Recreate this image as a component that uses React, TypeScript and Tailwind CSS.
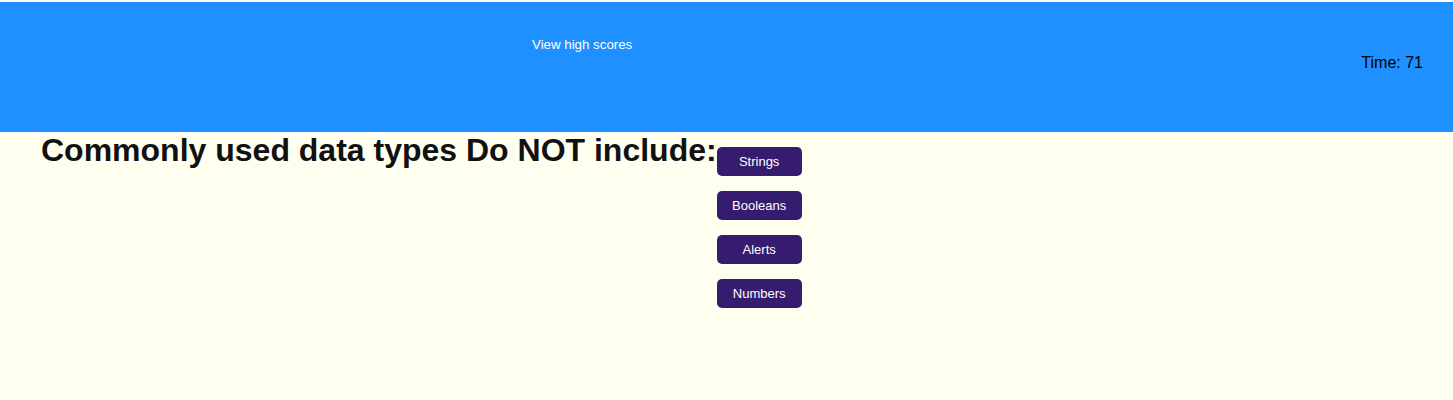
import React from 'react';

const choices = ['Strings', 'Booleans', 'Alerts', 'Numbers'];

export default function App() {
  return (
    <div className="min-h-screen bg-[#fffff0] pt-[2px] font-['Liberation_Sans',Arial,sans-serif]" style={{ backgroundImage: 'linear-gradient(#fff 0 2px, transparent 2px)' }}>
      {/* Header */}
      <header className="h-[130px] bg-[#1e90ff] flex items-start justify-between pr-[30px]">
        <a href="#" className="ml-[532px] mt-[33px] text-[13.3px] text-white">View high scores</a>
        <div className="mt-[49px] text-[16px] text-black">Time: 71</div>
      </header>

      {/* Question */}
      <main className="flex items-start pl-[41px]">
        <h1 className="text-[32px] leading-[37px] font-bold text-[#111]">Commonly used data types Do NOT include:</h1>
        <div className="flex flex-col gap-[15px] pt-[15px]">
          {choices.map(c => (
            <button key={c} className="w-[85px] h-[29px] rounded-[5px] bg-[#361c6e] text-white text-[13px]">
              {c}
            </button>
          ))}
        </div>
      </main>
    </div>
  );
}
